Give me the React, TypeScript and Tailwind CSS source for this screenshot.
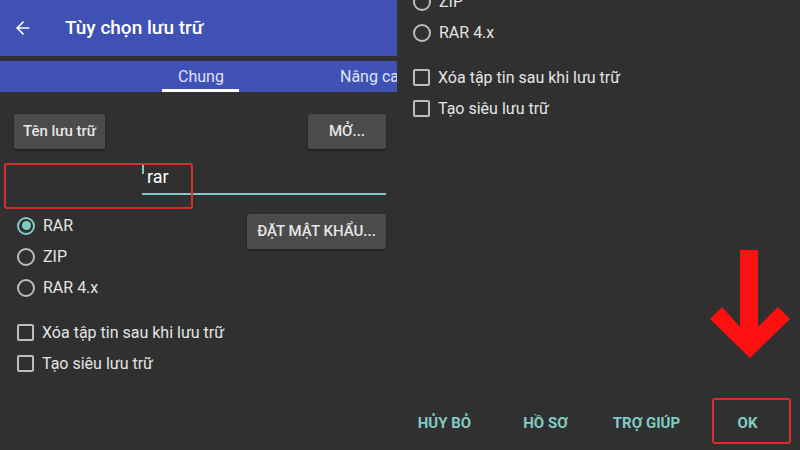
import { ArrowLeft } from "lucide-react";

const font = { fontFamily: "Roboto, 'Noto Sans', sans-serif" };

function Radio({ label, checked = false }: { label: string; checked?: boolean }) {
  return (
    <div className="flex h-[31px] items-center gap-[8px]">
      <span
        className={`flex h-[18px] w-[18px] items-center justify-center rounded-full border-2 ${
          checked ? "border-[#80cbc4]" : "border-[#bdbdbd]"
        }`}
      >
        {checked && <span className="h-[9px] w-[9px] rounded-full bg-[#80cbc4]" />}
      </span>
      <span className="text-[16px] text-[#e4e4e4]">{label}</span>
    </div>
  );
}

function Check({ label }: { label: string }) {
  return (
    <div className="flex h-[31px] items-center gap-[8px]">
      <span className="h-[17px] w-[17px] rounded-[2px] border-2 border-[#bdbdbd]" />
      <span className="text-[16px] text-[#e4e4e4]">{label}</span>
    </div>
  );
}

function GreyButton({ children, className = "" }: { children: React.ReactNode; className?: string }) {
  return (
    <div
      className={`flex h-[35px] items-center justify-center whitespace-nowrap rounded-[2px] bg-[#4b4b4b] text-[15px] font-medium text-[#e6e6e6] shadow-[0_1px_2px_rgba(0,0,0,0.5)] ${className}`}
    >
      {children}
    </div>
  );
}

function LeftPanel() {
  return (
    <div className="relative flex h-[450px] w-[397px] flex-col">
      {/* app bar */}
      <div className="flex h-[56px] items-center bg-[#3f51b5] pl-[13px] text-white">
        <ArrowLeft size={20} strokeWidth={2} />
        <span className="ml-[32px] text-[19px] font-medium">Tùy chọn lưu trữ</span>
      </div>
      <div className="h-[5px]" />
      {/* tabs */}
      <div className="relative h-[31px] overflow-hidden bg-[#3f51b5] text-[16px] text-[#dfe3f5]">
        <span className="absolute left-[178px] top-[4px]">Chung</span>
        <span className="absolute left-[340px] top-[4px] whitespace-nowrap">Nâng cao</span>
        <span className="absolute bottom-0 left-[162px] h-[3px] w-[77px] bg-white" />
      </div>

      <div className="flex flex-col pl-[14px] pr-[11px]">
        <div className="mt-[22px] flex justify-between">
          <GreyButton className="w-[91px]">Tên lưu trữ</GreyButton>
          <GreyButton className="w-[78px]">MỞ...</GreyButton>
        </div>

        {/* archive name input */}
        <div className="ml-[128px] mt-[11px] flex h-[35px] items-start border-b-2 border-[#80cbc4]">
          <span className="mt-[3px] h-[11px] w-[2px] bg-[#80cbc4]" />
          <span className="ml-[3px] mt-[6px] text-[18px] leading-[22px] text-white">rar</span>
        </div>

        <div className="mt-[15px] flex justify-between">
          <div className="flex flex-col pl-[3px]">
            <Radio label="RAR" checked />
            <Radio label="ZIP" />
            <Radio label="RAR 4.x" />
          </div>
          <GreyButton className="mt-[4px] w-[139px]">ĐẶT MẬT KHẨU...</GreyButton>
        </div>

        <div className="mt-[14px] flex flex-col pl-[3px]">
          <Check label="Xóa tập tin sau khi lưu trữ" />
          <Check label="Tạo siêu lưu trữ" />
        </div>
      </div>

      {/* highlight */}
      <div className="absolute left-[4px] top-[163px] h-[46px] w-[189px] rounded-[3px] border-2 border-[#d0302f]" />
    </div>
  );
}

function RightPanel() {
  return (
    <div className="relative flex h-[450px] flex-1 flex-col overflow-hidden">
      <div className="-mt-[14px] flex flex-col pl-[16px]">
        <Radio label="ZIP" />
        <Radio label="RAR 4.x" />
      </div>
      <div className="mt-[14px] flex flex-col pl-[16px]">
        <Check label="Xóa tập tin sau khi lưu trữ" />
        <Check label="Tạo siêu lưu trữ" />
      </div>
      <div className="flex-1" />
      <div className="-ml-[3px] grid h-[54px] grid-cols-[repeat(4,101px)] items-center text-[15px] font-bold text-[#80cbc4]">
        <span className="text-center">HỦY BỎ</span>
        <span className="text-center">HỒ SƠ</span>
        <span className="text-center">TRỢ GIÚP</span>
        <span className="text-center">OK</span>
      </div>

      {/* annotations */}
      <svg className="absolute left-[313px] top-[250px]" width="80" height="110" viewBox="0 0 80 110">
        <polygon
          points="30,0 48,0 48,77 68,57 80,69 40,108 0,69 12,57 30,77"
          fill="#ff1010"
        />
      </svg>
      <div className="absolute left-[315px] top-[398px] h-[46px] w-[79px] rounded-[3px] border-2 border-[#e02a2a]" />
    </div>
  );
}

export default function App() {
  return (
    <div className="flex h-[450px] w-[800px] overflow-hidden bg-[#303030]" style={font}>
      <LeftPanel />
      <RightPanel />
    </div>
  );
}
